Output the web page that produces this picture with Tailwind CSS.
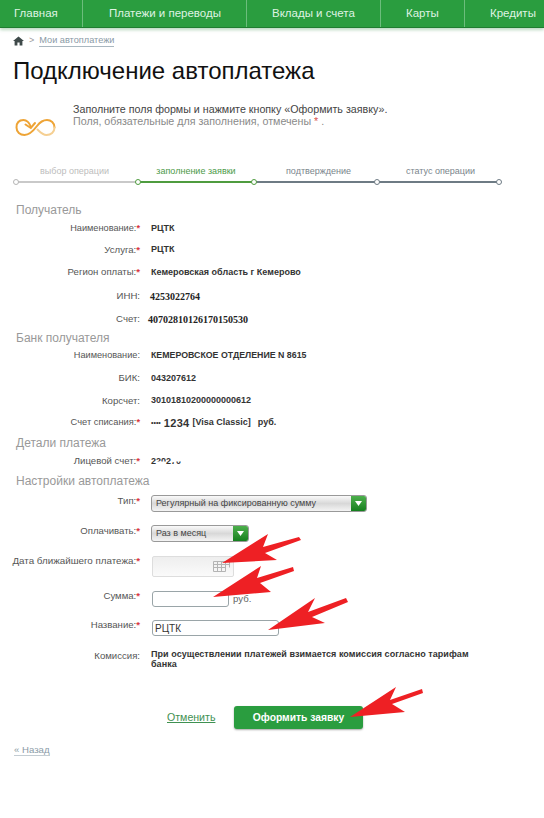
<!DOCTYPE html>
<html lang="ru"><head><meta charset="utf-8">
<script src="https://cdn.jsdelivr.net/npm/@tailwindcss/browser@4"></script>
</head>
<body class="bg-white font-['Liberation_Sans',Arial,sans-serif] relative w-[544px] h-[818px] overflow-hidden">
<nav class="h-[28px] bg-[#2a9d3f] border-b border-[#1f7d30] shadow-[0_2px_3px_rgba(60,150,80,0.35)] flex text-[11.5px] text-[#dff3e2] leading-[26px]">
  <div class="w-[83px] pl-[14px] border-r border-[#6cbd7c]">Главная</div>
  <div class="w-[164px] pl-[26px] border-r border-[#6cbd7c]">Платежи и переводы</div>
  <div class="w-[134px] pl-[25px] border-r border-[#6cbd7c]">Вклады и счета</div>
  <div class="w-[84px] pl-[25px] border-r border-[#6cbd7c]">Карты</div>
  <div class="flex-1 pl-[25px] whitespace-nowrap">Кредиты</div>
</nav>
<div class="h-[12px] mt-[7px] pl-[13px] flex items-center text-[9.2px]">
  <svg class="w-[11px] h-[10px]" viewBox="0 0 11 10"><path d="M5.500 .5 0 5h1.600v4.500h2.800V6.500h2.200v3h2.800V5H11z" fill="#3f4a4a"/></svg>
  <span class="ml-[5px] text-[#999] text-[9px]">&gt;</span>
  <a class="ml-[5px] text-[#8a9aa6] border-b border-[#a9b7c0] leading-[11px]">Мои автоплатежи</a>
</div>
<h1 class="mt-[8px] pl-[13px] text-[24px] leading-[32px] text-[#111]">Подключение автоплатежа</h1>
<div class="mt-[16px] h-[42px] flex pl-[15px]">
  <svg class="w-[41px] h-[20px] mt-[15px]" viewBox="0 0 41 20" fill="none" stroke="#eea436" stroke-width="2" stroke-linecap="round"><path d="M16 9C14 4 11 2 8.500 2 4 2 1.500 5 1.500 9.500 1.500 14 5 17 9.500 17 15 17 19 12 22 8 25 4 28 2 32 2 36 2 39.500 5 39.500 9.500"/><path stroke="#f5cf92" d="M39.500 9.500C39.500 14 36 17 31.500 17 27.500 17 25 14 22.500 11.500"/><path d="M10.500 6.500 15.800 10 20 5"/></svg>
  <div class="ml-[17px] text-[10.7px] leading-[12px] mt-[0px]">
    <p class="text-[#444]">Заполните поля формы и нажмите кнопку «Оформить заявку».</p>
    <p class="text-[#8a8a8a]">Поля, обязательные для заполнения, отмечены <span class="text-[#d9534f]">*</span> .</p>
  </div>
</div>
<div class="mt-[21px] ml-[15px] flex w-[484px] text-[9px] leading-[11px] text-center">
  <div class="w-[123px]"><div class="text-[#bdbdbd] h-[13px] pr-[4px]">выбор операции</div><div class="h-[2px] bg-[#c9c9c9] relative mt-[2px]"><i class="absolute -left-[2px] -top-[2px] w-[6px] h-[6px] rounded-full bg-white border border-[#b5b5b5]"></i></div></div>
  <div class="w-[116px]"><div class="text-[#4d9a48] h-[13px]">заполнение заявки</div><div class="h-[2px] bg-[#4f9c3f] relative mt-[2px]"><i class="absolute -left-[3px] -top-[2px] w-[6px] h-[6px] rounded-full bg-white border border-[#4f9c3f]"></i></div></div>
  <div class="w-[123px]"><div class="text-[#7a858c] h-[13px] pl-[6px]">подтверждение</div><div class="h-[2px] bg-[#6e7b84] relative mt-[2px]"><i class="absolute -left-[3px] -top-[2px] w-[6px] h-[6px] rounded-full bg-white border border-[#4f9c3f]"></i></div></div>
  <div class="w-[122px]"><div class="text-[#7a858c] h-[13px] pl-[5px]">статус операции</div><div class="h-[2px] bg-[#6e7b84] relative mt-[2px]"><i class="absolute -left-[3px] -top-[2px] w-[6px] h-[6px] rounded-full bg-white border border-[#6e7b84]"></i><i class="absolute -right-[3px] -top-[2px] w-[6px] h-[6px] rounded-full bg-white border border-[#6e7b84]"></i></div></div>
</div>

<form class="absolute left-0 top-[200px] w-[544px] text-[9px]">
  <div class="h-[19px] pl-[16px] text-[12px] text-[#999] flex items-center">Получатель</div>
  <div class="h-[20px] flex items-center"><label class="w-[141px] text-right pr-[1px] text-[9.2px] text-[#555]">Наименование:<b class="text-[#d9363e]">*</b></label><span class="ml-[10px] font-bold text-[#333]">РЦТК</span></div>
  <div class="h-[22px] flex items-center"><label class="w-[141px] text-right pr-[1px] text-[9.6px] text-[#555]">Услуга:<b class="text-[#d9363e]">*</b></label><span class="ml-[10px] font-bold text-[#333]">РЦТК</span></div>
  <div class="h-[23px] flex items-center"><label class="w-[141px] text-right pr-[1px] text-[9.6px] text-[#555]">Регион оплаты:<b class="text-[#d9363e]">*</b></label><span class="ml-[10px] font-bold text-[#333]">Кемеровская область г Кемерово</span></div>
  <div class="h-[24px] flex items-center"><label class="w-[141px] text-right pr-[1px] text-[9.6px] text-[#555]">ИНН:</label><span class="ml-[9px] text-[10px] font-bold text-[#222] font-['Liberation_Serif',serif]">4253022764</span></div>
  <div class="h-[22px] flex items-center"><label class="w-[141px] text-right pr-[1px] text-[9.6px] text-[#555]">Счет:</label><span class="ml-[7px] text-[10px] font-bold text-[#222] font-['Liberation_Serif',serif]">40702810126170150530</span></div>

  <div class="h-[15px] pl-[16px] text-[12px] text-[#999] flex items-center">Банк получателя</div>
  <div class="h-[22px] flex items-center"><label class="w-[141px] text-right pr-[1px] text-[9.2px] text-[#555]">Наименование:</label><span class="ml-[10px] text-[8.8px] font-bold text-[#333]">КЕМЕРОВСКОЕ ОТДЕЛЕНИЕ N 8615</span></div>
  <div class="h-[23px] flex items-center"><label class="w-[141px] text-right pr-[1px] text-[9.6px] text-[#555]">БИК:</label><span class="ml-[10px] font-bold text-[#333]">043207612</span></div>
  <div class="h-[22px] flex items-center"><label class="w-[141px] text-right pr-[1px] text-[9.6px] text-[#555]">Корсчет:</label><span class="ml-[10px] font-bold text-[#333]">30101810200000000612</span></div>
  <div class="h-[22px] flex items-center"><label class="w-[141px] text-right pr-[1px] text-[9.3px] text-[#555]">Счет списания:<b class="text-[#d9363e]">*</b></label><span class="ml-[10px] font-bold text-[#333] flex items-center"><span class="text-[7px]">••••</span><span class="ml-[3px] text-[11px] tracking-[0.3px]">1234</span><span class="ml-[3px]">[Visa Classic]</span><span class="ml-[7px]">руб.</span></span></div>

  <div class="h-[18px] pl-[16px] text-[12px] text-[#999] flex items-center">Детали платежа</div>
  <div class="h-[19px] flex items-center"><label class="w-[141px] text-right pr-[1px] text-[9.6px] text-[#555]">Лицевой счет:<b class="text-[#d9363e]">*</b></label><span class="ml-[10px] font-bold text-[#333]">2<span class="inline-block [clip-path:inset(0_0_50%_0)]">2</span><span class="inline-block [clip-path:inset(0_0_50%_0)]">0</span>2<span class="inline-block [clip-path:inset(55%_0_0_0)]">7</span><span class="inline-block [clip-path:inset(50%_0_0_0)]">0</span></span></div>
  <div class="h-[19px] pl-[16px] text-[12px] text-[#999] flex items-center">Настройки автоплатежа</div>

  <div class="h-[30px] flex items-start"><label class="w-[141px] text-right pr-[1px] text-[9.6px] text-[#555] mt-[4px]">Тип:<b class="text-[#d9363e]">*</b></label>
    <div class="ml-[10px] mt-[5px] w-[216px] h-[17px] flex rounded-[3px] border border-[#999] bg-gradient-to-b from-[#fafafa] via-[#d8d8d8] to-[#f4f4f4] overflow-hidden"><span class="flex-1 pl-[4px] leading-[15px] text-[#444]">Регулярный на фиксированную сумму</span><span class="w-[15px] bg-gradient-to-b from-[#4cb04c] to-[#137f1d] flex items-center justify-center"><svg class="w-[7px] h-[5px]" viewBox="0 0 7 5"><path d="M0 0h7L3.500 5z" fill="#fff"/></svg></span></div></div>
  <div class="h-[31px] flex items-start"><label class="w-[141px] text-right pr-[1px] text-[9.6px] text-[#555] mt-[4px]">Оплачивать:<b class="text-[#d9363e]">*</b></label>
    <div class="ml-[10px] mt-[5px] w-[98px] h-[17px] flex rounded-[3px] border border-[#999] bg-gradient-to-b from-[#fafafa] via-[#d8d8d8] to-[#f4f4f4] overflow-hidden"><span class="flex-1 pl-[4px] leading-[15px] text-[#444]">Раз в месяц</span><span class="w-[15px] bg-gradient-to-b from-[#4cb04c] to-[#137f1d] flex items-center justify-center"><svg class="w-[7px] h-[5px]" viewBox="0 0 7 5"><path d="M0 0h7L3.500 5z" fill="#fff"/></svg></span></div></div>
  <div class="h-[36px] flex items-start"><label class="w-[141px] text-right pr-[1px] text-[9.8px] text-[#555] mt-[3px]">Дата ближайшего платежа:<b class="text-[#d9363e]">*</b></label>
    <div class="ml-[11px] mt-[5px] w-[82px] h-[21px] rounded-[2px] border border-[#ddd] bg-gradient-to-b from-[#eee] to-[#fafafa] flex items-center justify-end pr-[3px]"><svg class="w-[17px] h-[11px]" viewBox="0 0 17 11" fill="none" stroke="#b4b4b4" stroke-width="1"><path d="M.5 .5h16M.5 3.500h16M.5 6.500h12M.5 10.500h12M.5 .5v10M4.500 .5v10M8.500 .5v10M12.500 .5v10M16.500 .5v6"/></svg></div></div>
  <div class="h-[29px] flex items-start"><label class="w-[141px] text-right pr-[1px] text-[9.6px] text-[#555] mt-[2px]">Сумма:<b class="text-[#d9363e]">*</b></label>
    <div class="ml-[11px] mt-[4px] w-[77px] h-[16px] rounded-[3px] border border-[#9aa5a8] bg-white"></div><span class="ml-[4px] mt-[5px] text-[9.6px] text-[#666]">руб.</span></div>
  <div class="h-[29px] flex items-start"><label class="w-[141px] text-right pr-[1px] text-[9.6px] text-[#555] mt-[2px]">Название:<b class="text-[#d9363e]">*</b></label>
    <div class="ml-[11px] mt-[4px] w-[127px] h-[16px] rounded-[3px] border border-[#9aa5a8] bg-white pl-[2px] leading-[15px] text-[10px] text-[#333]">РЦТК</div></div>
  <div class="flex items-start"><label class="w-[141px] text-right pr-[1px] text-[9.6px] text-[#555] mt-[4px]">Комиссия:</label>
    <p class="ml-[10px] mt-[4px] w-[325px] font-bold text-[#333] leading-[10px] tracking-[0.05px]">При осуществлении платежей взимается комиссия согласно тарифам банка</p></div>
  <div class="mt-[37px] flex items-center pl-[167px]">
    <a class="w-[48px] text-[10.6px] text-[#3f9152] underline">Отменить</a>
    <button type="button" class="ml-[19px] w-[129px] h-[23px] rounded-[3px] bg-[#2a9d3f] shadow-[0_1px_2px_rgba(0,0,0,0.35)] text-[10.3px] font-bold text-white">Оформить заявку</button>
  </div>
  <a class="block mt-[15px] ml-[14px] w-max text-[9.6px] text-[#8a9aa6] border-b border-[#c3ccd2] leading-[11px]">« Назад</a>
</form>

<svg class="absolute left-0 top-0 pointer-events-none" width="544" height="818" viewBox="0 0 544 818" fill="#ee2024">
  <polygon points="222,563 268,534 263,547 299,537 301,540 265,553 277,560"/>
  <polygon points="213,597 261,566 257,578 293,567 294,571 260,583 271,592"/>
  <polygon points="268,630 315,598 308,612 346,598 348,602 312,617 325,623"/>
  <polygon points="350,717 396,687 390,700 422,689 423,693 392,704 405,712"/>
</svg>
</body></html>
